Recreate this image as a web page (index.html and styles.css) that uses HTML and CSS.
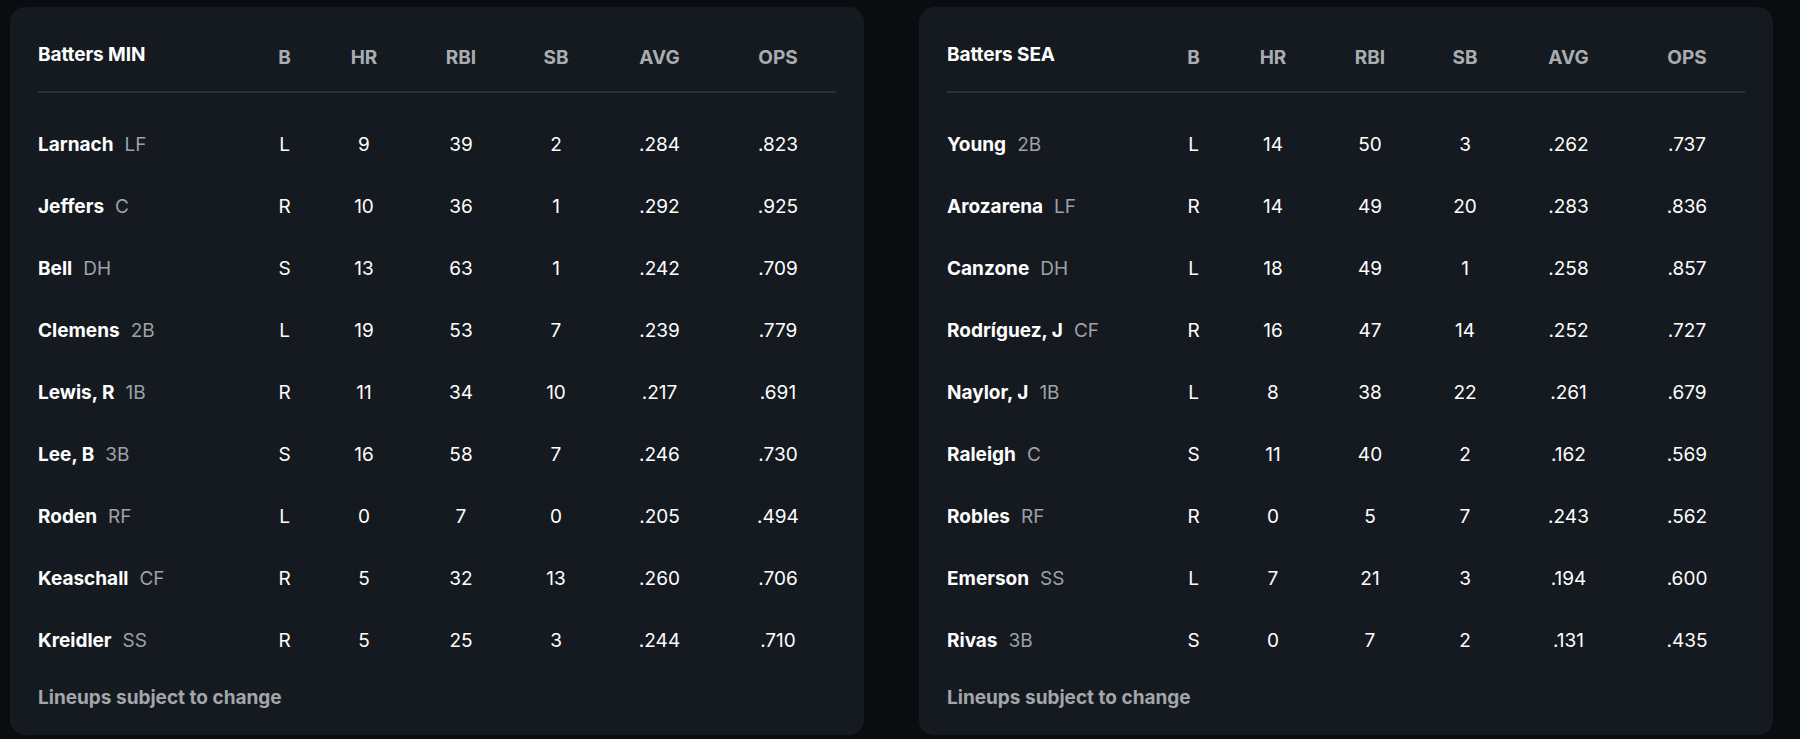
FILE: index.html
```html
<!DOCTYPE html>
<html lang="en">
<head>
<meta charset="utf-8">
<title>Batters</title>
<link rel="stylesheet" href="styles.css">
</head>
<body>
<main class="lineups">
  <section class="card">
    <div class="grid head">
      <div class="title">Batters MIN</div>
      <div class="col">B</div><div class="col">HR</div><div class="col">RBI</div><div class="col">SB</div><div class="col">AVG</div><div class="col">OPS</div>
    </div>
    <div class="rows">
      <div class="grid row"><div class="name"><b>Larnach</b><span class="pos">LF</span></div><div class="val">L</div><div class="val">9</div><div class="val">39</div><div class="val">2</div><div class="val">.284</div><div class="val">.823</div></div>
      <div class="grid row"><div class="name"><b>Jeffers</b><span class="pos">C</span></div><div class="val">R</div><div class="val">10</div><div class="val">36</div><div class="val">1</div><div class="val">.292</div><div class="val">.925</div></div>
      <div class="grid row"><div class="name"><b>Bell</b><span class="pos">DH</span></div><div class="val">S</div><div class="val">13</div><div class="val">63</div><div class="val">1</div><div class="val">.242</div><div class="val">.709</div></div>
      <div class="grid row"><div class="name"><b>Clemens</b><span class="pos">2B</span></div><div class="val">L</div><div class="val">19</div><div class="val">53</div><div class="val">7</div><div class="val">.239</div><div class="val">.779</div></div>
      <div class="grid row"><div class="name"><b>Lewis, R</b><span class="pos">1B</span></div><div class="val">R</div><div class="val">11</div><div class="val">34</div><div class="val">10</div><div class="val">.217</div><div class="val">.691</div></div>
      <div class="grid row"><div class="name"><b>Lee, B</b><span class="pos">3B</span></div><div class="val">S</div><div class="val">16</div><div class="val">58</div><div class="val">7</div><div class="val">.246</div><div class="val">.730</div></div>
      <div class="grid row"><div class="name"><b>Roden</b><span class="pos">RF</span></div><div class="val">L</div><div class="val">0</div><div class="val">7</div><div class="val">0</div><div class="val">.205</div><div class="val">.494</div></div>
      <div class="grid row"><div class="name"><b>Keaschall</b><span class="pos">CF</span></div><div class="val">R</div><div class="val">5</div><div class="val">32</div><div class="val">13</div><div class="val">.260</div><div class="val">.706</div></div>
      <div class="grid row"><div class="name"><b>Kreidler</b><span class="pos">SS</span></div><div class="val">R</div><div class="val">5</div><div class="val">25</div><div class="val">3</div><div class="val">.244</div><div class="val">.710</div></div>
    </div>
    <p class="note">Lineups subject to change</p>
  </section>
  <section class="card">
    <div class="grid head">
      <div class="title">Batters SEA</div>
      <div class="col">B</div><div class="col">HR</div><div class="col">RBI</div><div class="col">SB</div><div class="col">AVG</div><div class="col">OPS</div>
    </div>
    <div class="rows">
      <div class="grid row"><div class="name"><b>Young</b><span class="pos">2B</span></div><div class="val">L</div><div class="val">14</div><div class="val">50</div><div class="val">3</div><div class="val">.262</div><div class="val">.737</div></div>
      <div class="grid row"><div class="name"><b>Arozarena</b><span class="pos">LF</span></div><div class="val">R</div><div class="val">14</div><div class="val">49</div><div class="val">20</div><div class="val">.283</div><div class="val">.836</div></div>
      <div class="grid row"><div class="name"><b>Canzone</b><span class="pos">DH</span></div><div class="val">L</div><div class="val">18</div><div class="val">49</div><div class="val">1</div><div class="val">.258</div><div class="val">.857</div></div>
      <div class="grid row"><div class="name"><b>Rodríguez, J</b><span class="pos">CF</span></div><div class="val">R</div><div class="val">16</div><div class="val">47</div><div class="val">14</div><div class="val">.252</div><div class="val">.727</div></div>
      <div class="grid row"><div class="name"><b>Naylor, J</b><span class="pos">1B</span></div><div class="val">L</div><div class="val">8</div><div class="val">38</div><div class="val">22</div><div class="val">.261</div><div class="val">.679</div></div>
      <div class="grid row"><div class="name"><b>Raleigh</b><span class="pos">C</span></div><div class="val">S</div><div class="val">11</div><div class="val">40</div><div class="val">2</div><div class="val">.162</div><div class="val">.569</div></div>
      <div class="grid row"><div class="name"><b>Robles</b><span class="pos">RF</span></div><div class="val">R</div><div class="val">0</div><div class="val">5</div><div class="val">7</div><div class="val">.243</div><div class="val">.562</div></div>
      <div class="grid row"><div class="name"><b>Emerson</b><span class="pos">SS</span></div><div class="val">L</div><div class="val">7</div><div class="val">21</div><div class="val">3</div><div class="val">.194</div><div class="val">.600</div></div>
      <div class="grid row"><div class="name"><b>Rivas</b><span class="pos">3B</span></div><div class="val">S</div><div class="val">0</div><div class="val">7</div><div class="val">2</div><div class="val">.131</div><div class="val">.435</div></div>
    </div>
    <p class="note">Lineups subject to change</p>
  </section>
</main>
</body>
</html>
```

FILE: styles.css
```css
* { box-sizing: border-box; }
html, body { margin: 0; padding: 0; }
body {
  background: #0a0d10;
  font-family: Inter, "Noto Sans", sans-serif;
  color: #ffffff;
  height: 739px;
  overflow: hidden;
}
.lineups {
  display: flex;
  gap: 55px;
  padding: 7px 26px 4px 10px;
}
.card {
  flex: 0 0 854px;
  height: 728px;
  background: #151a20;
  border-radius: 15px;
  padding: 36px 28px 0 28px;
}
.grid {
  display: grid;
  grid-template-columns: 206px 81px 78px 116px 74px 133px 104px;
  font-size: 19px;
  line-height: 24px;
}
.head {
  padding-bottom: 21px;
  border-bottom: 2px solid #28313b;
}
.title { font-weight: 700; color: #ffffff; letter-spacing: -0.1px; }
.col {
  text-align: center;
  font-weight: 700;
  color: #a9acb0;
  padding-top: 3px;
}
.rows { margin-top: 21px; }
.row {
  height: 62px;
  align-items: center;
}
.name b { font-weight: 700; }
.pos {
  color: #9ea1a5;
  margin-left: 11px;
  font-weight: 400;
}
.val { text-align: center; }
.note {
  margin: 14px 0 0;
  font-size: 19px;
  line-height: 24px;
  font-weight: 700;
  color: #a3a6aa;
}
```
